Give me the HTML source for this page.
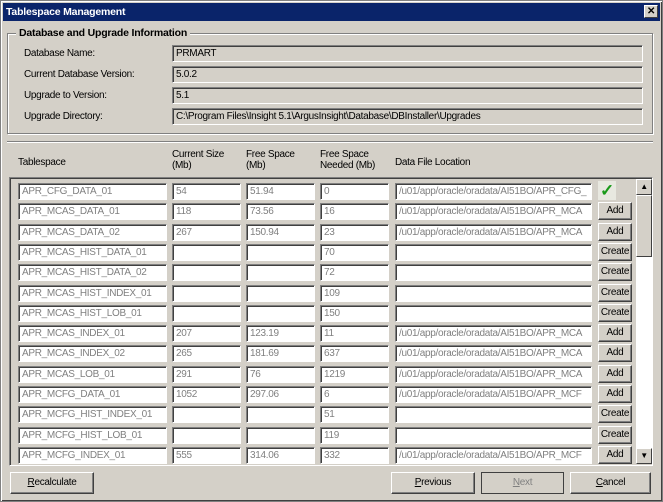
<!DOCTYPE html>
<html><head><style>
*{margin:0;padding:0;box-sizing:border-box}
body{width:663px;height:502px;background:#d4d0c8;font-family:"Liberation Sans",Arial,sans-serif;font-size:10px;letter-spacing:-0.3px;position:relative;overflow:hidden;color:#000}
.a{position:absolute}
.win{left:0;top:0;width:663px;height:502px;border:1px solid #808080;box-shadow:inset 1px 1px #fff,inset -1px -1px #404040}
.title{left:3px;top:3px;width:657px;height:18px;background:#0a246a;color:#fff;font-weight:bold;font-size:10.5px;letter-spacing:-0.2px;line-height:18px;padding-left:3px}
.close{left:644px;top:5px;width:14px;height:13px;background:#d4d0c8;border:1px solid;border-color:#fff #404040 #404040 #fff;font-size:10px;line-height:11px;text-align:center;font-weight:bold;color:#000}
.grp{left:7px;top:33px;width:646px;height:101px;border:1px solid #808080;box-shadow:1px 1px #fff,inset 1px 1px #fff}
.gt{left:16px;top:27px;background:#d4d0c8;padding:0 3px;font-weight:bold;font-size:10.5px;letter-spacing:-0.2px}
.lbl{left:24px}
.ro{left:172px;width:471px;height:17px;border:1px solid;border-color:#808080 #fff #fff #808080;box-shadow:inset 1px 1px #404040;padding-left:3px;line-height:15px}
.sep{left:7px;top:141px;width:646px;height:2px;border-top:1px solid #808080;border-bottom:1px solid #fff}
.hd{top:149px;line-height:11px}
.panel{left:9px;top:177px;width:644px;height:289px;border:1px solid;border-color:#808080 #fff #fff #808080;box-shadow:inset 1px 1px #404040}
.in{height:17px;border:1px solid;border-color:#808080 #fff #fff #808080;box-shadow:inset 1px 1px #404040;background:#fff;color:#808080;padding-left:3px;line-height:15px;white-space:nowrap;overflow:hidden}
.btn{border:1px solid;border-color:#fff #404040 #404040 #fff;box-shadow:inset -1px -1px #808080;background:#d4d0c8;text-align:center}
.sb{left:636px;top:179px;width:16px;height:285px;background:#fff}
.arr{width:16px;height:16px;background:#d4d0c8;border:1px solid;border-color:#fff #404040 #404040 #fff;font-size:8px;line-height:14px;text-align:center}
</style></head><body>
<div class="a win"></div>
<div class="a title">Tablespace Management</div>
<div class="a close">✕</div>
<div class="a grp"></div>
<div class="a gt">Database and Upgrade Information</div>
<div class="a lbl" style="top:48px">Database Name:</div>
<div class="a lbl" style="top:69px">Current Database Version:</div>
<div class="a lbl" style="top:90px">Upgrade to Version:</div>
<div class="a lbl" style="top:111px">Upgrade Directory:</div>
<div class="a ro" style="top:45px">PRMART</div>
<div class="a ro" style="top:66px">5.0.2</div>
<div class="a ro" style="top:87px">5.1</div>
<div class="a ro" style="top:108px">C:\Program Files\Insight 5.1\ArgusInsight\Database\DBInstaller\Upgrades</div>
<div class="a sep"></div>
<div class="a hd" style="left:18px;top:157px">Tablespace</div>
<div class="a hd" style="left:172px">Current Size<br>(Mb)</div>
<div class="a hd" style="left:246px">Free Space<br>(Mb)</div>
<div class="a hd" style="left:320px">Free Space<br>Needed (Mb)</div>
<div class="a hd" style="left:395px;top:157px">Data File Location</div>
<div class="a panel"></div>
<div class="a sb"></div>
<div class="a arr" style="left:636px;top:179px">▲</div>
<div class="a" style="left:636px;top:195px;width:16px;height:62px;background:#d4d0c8;border:1px solid;border-color:#fff #404040 #404040 #fff"></div>
<div class="a arr" style="left:636px;top:448px">▼</div>
<div id="rows"></div>
<div class="a btn" style="left:10px;top:472px;width:84px;height:22px;line-height:20px"><u>R</u>ecalculate</div>
<div class="a btn" style="left:391px;top:472px;width:84px;height:22px;line-height:20px"><u>P</u>revious</div>
<div class="a btn" style="left:481px;top:472px;width:83px;height:22px;line-height:20px;color:#808080;border-color:#404040;box-shadow:none"><u>N</u>ext</div>
<div class="a btn" style="left:570px;top:472px;width:81px;height:22px;line-height:20px"><u>C</u>ancel</div>
<script>
var d=[["APR_CFG_DATA_01","54","51.94","0","/u01/app/oracle/oradata/AI51BO/APR_CFG_","ok"],
["APR_MCAS_DATA_01","118","73.56","16","/u01/app/oracle/oradata/AI51BO/APR_MCA","Add"],
["APR_MCAS_DATA_02","267","150.94","23","/u01/app/oracle/oradata/AI51BO/APR_MCA","Add"],
["APR_MCAS_HIST_DATA_01","","","70","","Create"],
["APR_MCAS_HIST_DATA_02","","","72","","Create"],
["APR_MCAS_HIST_INDEX_01","","","109","","Create"],
["APR_MCAS_HIST_LOB_01","","","150","","Create"],
["APR_MCAS_INDEX_01","207","123.19","11","/u01/app/oracle/oradata/AI51BO/APR_MCA","Add"],
["APR_MCAS_INDEX_02","265","181.69","637","/u01/app/oracle/oradata/AI51BO/APR_MCA","Add"],
["APR_MCAS_LOB_01","291","76","1219","/u01/app/oracle/oradata/AI51BO/APR_MCA","Add"],
["APR_MCFG_DATA_01","1052","297.06","6","/u01/app/oracle/oradata/AI51BO/APR_MCF","Add"],
["APR_MCFG_HIST_INDEX_01","","","51","","Create"],
["APR_MCFG_HIST_LOB_01","","","119","","Create"],
["APR_MCFG_INDEX_01","555","314.06","332","/u01/app/oracle/oradata/AI51BO/APR_MCF","Add"]];
var cols=[[18,149],[172,69],[246,69],[320,69],[395,197]],h="";
d.forEach(function(r,i){var y=183+Math.round(i*20.3);
cols.forEach(function(c,j){h+='<div class="a in" style="left:'+c[0]+'px;top:'+y+'px;width:'+c[1]+'px">'+r[j]+'</div>';});
if(r[5]=="ok")h+='<div class="a" style="left:598px;top:'+(y-2)+'px;width:18px;height:19px;background:#e8e8e0;color:#1a9a1a;font-size:17px;font-weight:bold;line-height:19px;text-align:center">✓</div>';
else h+='<div class="a btn" style="left:598px;top:'+(y-1)+'px;width:34px;height:18px;line-height:16px">'+r[5]+'</div>';});
document.getElementById("rows").innerHTML=h;
</script>
</body></html>
